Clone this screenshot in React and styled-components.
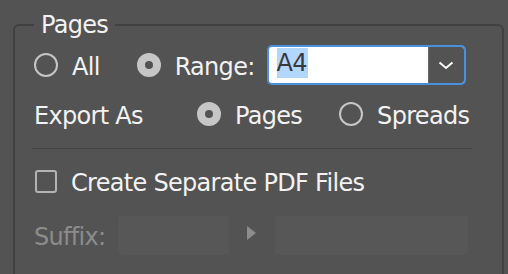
import React from 'react'
import styled, { createGlobalStyle } from 'styled-components'

const Global = createGlobalStyle`
    html, body {
        margin: 0;
        padding: 0;
        background: #535353;
        overflow: hidden;
    }
    body {
        font-family: 'DejaVu Sans', 'Liberation Sans', sans-serif;
        font-size: 24px;
        letter-spacing: -0.7px;
        color: #f2f2f2;
    }
`

const Group = styled.fieldset`
    margin: 11px 0 0 13px;
    width: 491px;
    box-sizing: border-box;
    height: 300px;
    padding: 0 0 0 19px;
    border: 2px solid #414141;
    border-radius: 6px;
`

const Legend = styled.legend`
    padding: 0 7px;
    line-height: 28px;
    color: #f2f2f2;
`

const Row = styled.div`
    display: flex;
    align-items: center;
    height: ${p => p.h || 40}px;
    margin-top: ${p => p.top || 0}px;
    line-height: 28px;
`

const Option = styled.label`
    display: flex;
    align-items: center;
    gap: 14px;
    margin-left: ${p => p.left || 0}px;
`

const Radio = styled.span`
    width: 24px;
    height: 24px;
    box-sizing: border-box;
    border-radius: 50%;
    border: 2px solid #c6c6c6;
    background: ${p => (p.checked ? '#c6c6c6' : 'transparent')};
    display: flex;
    align-items: center;
    justify-content: center;
    &::after {
        content: '';
        width: 8px;
        height: 8px;
        border-radius: 50%;
        background: ${p => (p.checked ? '#535353' : 'transparent')};
    }
`

const Label = styled.span`
    color: ${p => (p.disabled ? '#8c8c8c' : '#f2f2f2')};
    width: ${p => (p.w ? p.w + 'px' : 'auto')};
    padding-top: 3px;
`

const Select = styled.div`
    margin-left: 12px;
    width: 199px;
    height: 40px;
    box-sizing: border-box;
    border: 2px solid #4a90da;
    border-radius: 5px;
    background: #fff;
    display: flex;
    overflow: hidden;
`

const SelectText = styled.div`
    flex: 1;
    padding: 1px 0 0 8px;
`

const Highlight = styled.span`
    display: inline-block;
    background: #b3d6fd;
    color: #3a3a3a;
    line-height: 30px;
    padding-right: 1px;
`

const SelectButton = styled.div`
    width: 35px;
    background: #535353;
    border-left: 1px solid #6a6a6a;
    display: flex;
    align-items: center;
    justify-content: center;
`

const Separator = styled.div`
    height: 1px;
    background: #444;
    margin: 14px 0 0 -2px;
    width: 440px;
`

const Checkbox = styled.span`
    width: 22px;
    height: 23px;
    box-sizing: border-box;
    border: 2px solid #b4b4b4;
    border-radius: 3px;
    margin-left: 1px;
`

const Field = styled.div`
    width: ${p => p.w}px;
    height: 39px;
    margin-left: ${p => p.left || 0}px;
    background: #575757;
    border-radius: 4px;
`

const Arrow = styled.span`
    margin-left: 18px;
    width: 0;
    height: 0;
    border-top: 7.5px solid transparent;
    border-bottom: 7.5px solid transparent;
    border-left: 9px solid #8d8d8d;
    margin-bottom: 4px;
`

export default function App() {
    return (
        <>
            <Global />
            <Group>
                <Legend>Pages</Legend>
                <Row top={6}>
                    <Option>
                        <Radio />
                        <Label>All</Label>
                    </Option>
                    <Option left={37}>
                        <Radio checked />
                        <Label>Range:</Label>
                    </Option>
                    <Select>
                        <SelectText>
                            <Highlight>A4</Highlight>
                        </SelectText>
                        <SelectButton>
                            <svg width="16" height="9" viewBox="0 0 16 9">
                                <polyline points="1.5,1.5 8,7 14.5,1.5" fill="none" stroke="#fff" strokeWidth="2" />
                            </svg>
                        </SelectButton>
                    </Select>
                </Row>
                <Row top={9}>
                    <Label w={163}>Export As</Label>
                    <Option>
                        <Radio checked />
                        <Label>Pages</Label>
                    </Option>
                    <Option left={37}>
                        <Radio />
                        <Label>Spreads</Label>
                    </Option>
                </Row>
                <Separator />
                <Row top={17} h={30}>
                    <Option>
                        <Checkbox />
                        <Label>Create Separate PDF Files</Label>
                    </Option>
                </Row>
                <Row top={19}>
                    <Label disabled>Suffix:</Label>
                    <Field w={111} left={13} />
                    <Arrow />
                    <Field w={193} left={19} />
                </Row>
            </Group>
        </>
    )
}
